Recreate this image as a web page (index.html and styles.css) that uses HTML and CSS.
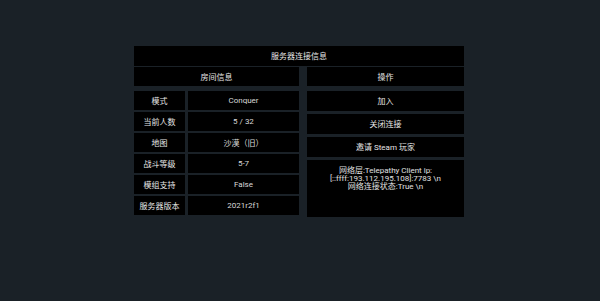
FILE: index.html
```html
<!DOCTYPE html>
<html lang="zh">
<head>
<meta charset="utf-8">
<link rel="stylesheet" href="styles.css">
</head>
<body>
<div class="panel">
  <div class="title cell">服务器连接信息</div>
  <div class="columns">
    <div class="left">
      <div class="head cell">房间信息</div>
      <div class="rows">
        <div class="row"><div class="label cell">模式</div><div class="value cell">Conquer</div></div>
        <div class="row"><div class="label cell">当前人数</div><div class="value cell">5 / 32</div></div>
        <div class="row"><div class="label cell">地图</div><div class="value cell">沙漠（旧）</div></div>
        <div class="row"><div class="label cell">战斗等级</div><div class="value cell">5-7</div></div>
        <div class="row"><div class="label cell">模组支持</div><div class="value cell">False</div></div>
        <div class="row"><div class="label cell">服务器版本</div><div class="value cell">2021r2f1</div></div>
      </div>
    </div>
    <div class="right">
      <div class="head cell">操作</div>
      <div class="buttons">
        <div class="btn cell">加入</div>
        <div class="btn cell">关闭连接</div>
        <div class="btn cell">邀请 Steam 玩家</div>
        <div class="log">网络层:Telepathy Client ip:<br>[::ffff:193.112.195.108]:7783 \n<br>网络连接状态:True \n</div>
      </div>
    </div>
  </div>
</div>
</body>
</html>
```
FILE: styles.css
```css
html, body {
  margin: 0;
  padding: 0;
  background: #1a2127;
  width: 600px;
  height: 301px;
  overflow: hidden;
}
body {
  font-family: "Roboto", "Noto Sans CJK SC", sans-serif;
  font-size: 8px;
  color: #e6e6e6;
}
.panel {
  width: 330px;
  margin: 46px 0 0 134px;
  display: flex;
  flex-direction: column;
  gap: 1.5px;
}
.cell {
  background: #000;
  display: flex;
  align-items: center;
  justify-content: center;
  white-space: nowrap;
}
.title {
  height: 19.5px;
}
.columns {
  display: flex;
  gap: 8px;
}
.left {
  width: 165px;
  display: flex;
  flex-direction: column;
}
.right {
  width: 157px;
  display: flex;
  flex-direction: column;
}
.head {
  height: 19px;
}
.rows {
  margin-top: 5px;
  display: flex;
  flex-direction: column;
  gap: 2.6px;
}
.row {
  display: flex;
  gap: 3px;
  height: 18.5px;
}
.label {
  width: 51px;
}
.value {
  width: 111px;
  color: #d8d8d8;
}
.buttons {
  margin-top: 5px;
  display: flex;
  flex-direction: column;
  gap: 3.5px;
}
.btn {
  height: 19.5px;
}
.log {
  background: #000;
  height: 57px;
  box-sizing: border-box;
  padding-top: 6.5px;
  text-align: center;
  line-height: 8px;
  color: #e0e0e0;
}
```
